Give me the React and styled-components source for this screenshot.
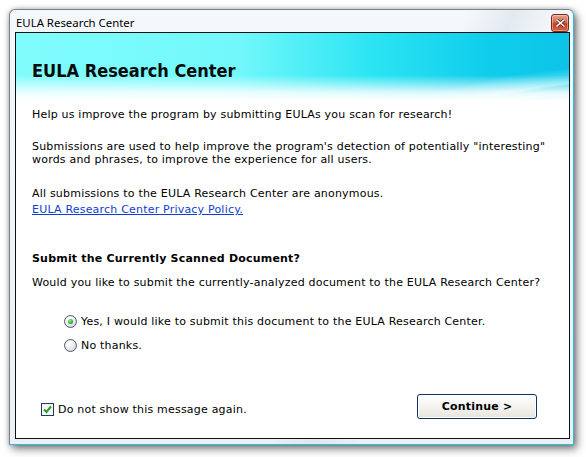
import React from 'react';
import styled, { createGlobalStyle } from 'styled-components';

const GlobalStyle = createGlobalStyle`
  html, body {
    margin: 0;
    padding: 0;
    background: #ffffff;
  }
  body {
    font-family: "DejaVu Sans", "Liberation Sans", sans-serif;
    font-size: 11px;
    letter-spacing: 0.2px;
    color: #000;
  }
`;

const Page = styled.div`
  width: 586px;
  height: 457px;
  padding: 9px 0 0 9px;
  box-sizing: border-box;
  overflow: hidden;
`;

const Window = styled.div`
  width: 565px;
  height: 436px;
  box-sizing: border-box;
  display: flex;
  flex-direction: column;
  border: 1px solid #7b8088;
  border-right-color: #24c2dc;
  border-bottom-color: #24c2dc;
  border-radius: 6px 6px 0 0;
  background:
    linear-gradient(115deg, rgba(255,255,255,0) 0%, rgba(255,255,255,0) 60%, rgba(214,222,232,0.55) 66%, rgba(255,255,255,0) 72%),
    linear-gradient(180deg, #f4f8fb 0%, #eaf0f6 100%);
  box-shadow: 3px 4px 9px rgba(0, 0, 0, 0.5), 0 0 5px rgba(0, 0, 0, 0.25);
`;

const TitleBar = styled.div`
  height: 22px;
  flex: none;
  display: flex;
  align-items: center;
  justify-content: space-between;
  padding: 0 4px 0 6px;
`;

const TitleText = styled.span`
  font-family: "Noto Sans", "Open Sans", sans-serif;
  font-size: 11.4px;
  letter-spacing: 0;
  color: #000;
  padding-top: 3px;
`;

const CloseButton = styled.div`
  width: 16px;
  height: 16px;
  margin-top: 4px;
  border: 1px solid #7a2a1a;
  border-radius: 3px;
  display: flex;
  align-items: center;
  justify-content: center;
  background: linear-gradient(180deg, #eaa28f 0%, #d4694e 45%, #c2401e 55%, #d7643f 100%);
  box-shadow: inset 0 0 0 1px rgba(255, 255, 255, 0.35);
`;

const Client = styled.div`
  flex: 1;
  margin: 0 3px 5px 5px;
  border: 1px solid #111;
  background: #fff;
  display: flex;
  flex-direction: column;
`;

const Banner = styled.div`
  height: 68px;
  flex: none;
  display: flex;
  align-items: center;
  padding: 0 17px 0 16px;
  background:
    linear-gradient(180deg, rgba(255,255,255,0) 0%, rgba(255,255,255,0) 62%, rgba(255,255,255,0.85) 88%, #ffffff 100%),
    radial-gradient(ellipse 420px 120px at 640px 118px, rgba(255,255,255,0) 0%, rgba(255,255,255,0) 58%, rgba(180,250,255,0.55) 60%, rgba(255,255,255,0) 72%),
    radial-gradient(ellipse 300px 90px at 560px 120px, rgba(255,255,255,0) 0%, rgba(255,255,255,0) 62%, rgba(200,252,255,0.5) 64%, rgba(255,255,255,0) 75%),
    linear-gradient(90deg, #80fcfc 0%, #72f8fb 40%, #2ae4f2 65%, #10cdec 85%, #0cc4e8 100%);
`;

const BannerTitle = styled.h1`
  margin: 0;
  padding-top: 7px;
  font-family: "DejaVu Sans Condensed", "DejaVu Sans", sans-serif;
  font-weight: bold;
  font-size: 18px;
  letter-spacing: 0;
  color: #0a0a0a;
`;

const Body = styled.div`
  padding: 7px 17px 0 16px;
  line-height: 13px;
`;

const Para = styled.p`
  margin: ${p => p.$top || 0}px 0 0 0;
`;

const Link = styled.a`
  display: block;
  margin-top: 3px;
  color: #1040d0;
  text-decoration: underline;
`;

const Heading = styled.div`
  margin-top: 36px;
  font-weight: bold;
`;

const RadioGroup = styled.div`
  margin: 26px 0 0 32px;
  display: flex;
  flex-direction: column;
  gap: 11px;
`;

const RadioRow = styled.label`
  display: flex;
  align-items: center;
  gap: 4px;
  height: 13px;
`;

const RadioCircle = styled.span`
  width: 11px;
  height: 11px;
  flex: none;
  border-radius: 50%;
  border: 1px solid #4d5b6b;
  display: flex;
  align-items: center;
  justify-content: center;
  background: radial-gradient(circle at 35% 30%, #ffffff 0%, #eef0f2 40%, #c9ced4 100%);
`;

const RadioDot = styled.span`
  width: 5px;
  height: 5px;
  border-radius: 50%;
  background: radial-gradient(circle at 40% 35%, #9ef09e 0%, #2fb52f 55%, #1d7a1d 100%);
`;

const Footer = styled.div`
  margin-top: auto;
  display: flex;
  align-items: center;
  justify-content: space-between;
  padding: 0 32px 19px 25px;
`;

const CheckRow = styled.label`
  display: flex;
  align-items: center;
  gap: 4px;
  padding-top: 6px;
`;

const CheckBox = styled.span`
  width: 11px;
  height: 11px;
  flex: none;
  border: 1px solid #1c3b63;
  background: linear-gradient(180deg, #f2f2f2, #ffffff);
  display: flex;
  align-items: center;
  justify-content: center;
`;

const ContinueButton = styled.button`
  width: 120px;
  height: 25px;
  border: 1px solid #0f3463;
  border-radius: 3px;
  background: linear-gradient(180deg, #ffffff 0%, #f4f3ef 50%, #e6e4dc 100%);
  box-shadow: inset 0 0 0 1px #ffffff;
  font-family: "DejaVu Sans", sans-serif;
  font-size: 11px;
  letter-spacing: 0.2px;
  font-weight: bold;
  color: #000;
  padding: 0;
`;

const Radio = ({ checked, children }) => (
  <RadioRow>
    <RadioCircle>{checked && <RadioDot />}</RadioCircle>
    <span>{children}</span>
  </RadioRow>
);

const App = () => {
  return (
    <>
      <GlobalStyle />
      <Page>
        <Window>
          <TitleBar>
            <TitleText>EULA Research Center</TitleText>
            <CloseButton>
              <svg width="9" height="8" viewBox="0 0 9 8">
                <path d="M1 1 L8 7 M8 1 L1 7" stroke="#5a1a0a" strokeWidth="3" strokeLinecap="square" />
                <path d="M1 1 L8 7 M8 1 L1 7" stroke="#ffffff" strokeWidth="1.6" strokeLinecap="square" />
              </svg>
            </CloseButton>
          </TitleBar>
          <Client>
            <Banner>
              <BannerTitle>EULA Research Center</BannerTitle>
            </Banner>
            <Body>
              <Para>Help us improve the program by submitting EULAs you scan for research!</Para>
              <Para $top={19}>
                Submissions are used to help improve the program's detection of potentially "interesting"
                <br />
                words and phrases, to improve the experience for all users.
              </Para>
              <Para $top={21}>All submissions to the EULA Research Center are anonymous.</Para>
              <Link href="#">EULA Research Center Privacy Policy.</Link>
              <Heading>Submit the Currently Scanned Document?</Heading>
              <Para $top={11}>Would you like to submit the currently-analyzed document to the EULA Research Center?</Para>
              <RadioGroup>
                <Radio checked>Yes, I would like to submit this document to the EULA Research Center.</Radio>
                <Radio>No thanks.</Radio>
              </RadioGroup>
            </Body>
            <Footer>
              <CheckRow>
                <CheckBox>
                  <svg width="9" height="9" viewBox="0 0 9 9">
                    <path d="M1 4.5 L3.5 7 L8 1.5" fill="none" stroke="#2a9a2a" strokeWidth="2" />
                  </svg>
                </CheckBox>
                <span>Do not show this message again.</span>
              </CheckRow>
              <ContinueButton>Continue &gt;</ContinueButton>
            </Footer>
          </Client>
        </Window>
      </Page>
    </>
  );
};

export default App;
